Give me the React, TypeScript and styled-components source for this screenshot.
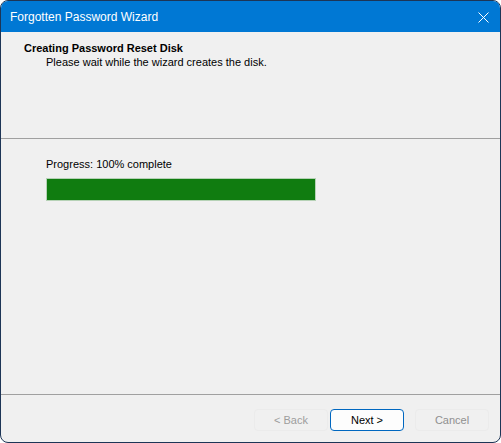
import React from 'react';
import styled, { createGlobalStyle } from 'styled-components';

const GlobalStyle = createGlobalStyle`
  html, body {
    margin: 0;
    padding: 0;
    background: #ffffff;
  }
`;

const Window = styled.div`
  width: 501px;
  height: 443px;
  box-sizing: border-box;
  display: flex;
  flex-direction: column;
  border: 1px solid #1d3556;
  border-radius: 8px;
  overflow: hidden;
  background-color: #f0f0f0;
  font-family: 'Liberation Sans', Arial, sans-serif;
  font-size: 11px;
  color: #000;
`;

const TitleBar = styled.div`
  height: 31px;
  flex-shrink: 0;
  display: flex;
  align-items: center;
  justify-content: space-between;
  padding: 0 10px 0 9px;
  background-color: #0078d4;
  color: #fff;
  font-size: 12px;
`;

const CloseIcon = styled.svg`
  width: 11px;
  height: 11px;
  margin-right: 1px;
  margin-top: 1px;
`;

const Header = styled.div`
  height: 106px;
  flex-shrink: 0;
  box-sizing: border-box;
  padding: 10px 0 0 23px;
  display: flex;
  flex-direction: column;
  gap: 1px;

  h1 {
    margin: 0;
    font-size: 11px;
    line-height: 13px;
    font-weight: 700;
  }

  p {
    margin: 0 0 0 22px;
    line-height: 13px;
  }
`;

const Rule = styled.div`
  height: 1px;
  flex-shrink: 0;
  background-color: #a0a0a0;
`;

const Body = styled.div`
  flex: 1;
  padding: 19px 0 0 45px;
  display: flex;
  flex-direction: column;
  gap: 7px;
`;

const Label = styled.div`
  line-height: 13px;
`;

const Track = styled.div`
  width: 270px;
  height: 23px;
  box-sizing: border-box;
  border: 1px solid #b6d2b6;
  background-color: #e6e6e6;
`;

const Fill = styled.div`
  height: 100%;
  background-color: #107c10;
`;

const Footer = styled.div`
  height: 47px;
  flex-shrink: 0;
  box-sizing: border-box;
  padding: 14px 11px 0 0;
  display: flex;
  justify-content: flex-end;
  align-items: flex-start;
`;

const Button = styled.button<{ primary?: boolean; gapLeft?: number }>`
  width: 74px;
  height: 22px;
  margin-left: ${({ gapLeft }) => gapLeft ?? 0}px;
  box-sizing: border-box;
  border-radius: 4px;
  font-family: 'Liberation Sans', Arial, sans-serif;
  font-size: 11px;
  padding: 0;
  background-color: ${({ primary }) => (primary ? '#fdfdfd' : '#f0f0f0')};
  border: 1px solid ${({ primary }) => (primary ? '#0067c0' : '#ebebeb')};
  color: ${({ primary, disabled }) => (disabled ? '#9d9d9d' : primary ? '#000' : '#8f8f8f')};
`;

export default function App() {
  const progress = 100;
  return (
    <>
      <GlobalStyle />
      <Window>
        <TitleBar>
          <span>Forgotten Password Wizard</span>
          <CloseIcon viewBox="0 0 11 11">
            <path d="M0.5 0.5 L10.5 10.5 M10.5 0.5 L0.5 10.5" stroke="#fff" strokeWidth="1" />
          </CloseIcon>
        </TitleBar>
        <Header>
          <h1>Creating Password Reset Disk</h1>
          <p>Please wait while the wizard creates the disk.</p>
        </Header>
        <Rule />
        <Body>
          <Label>Progress: {progress}% complete</Label>
          <Track>
            <Fill style={{ width: `${progress}%` }} />
          </Track>
        </Body>
        <Rule />
        <Footer>
          <Button disabled>&lt; Back</Button>
          <Button primary gapLeft={2}>Next &gt;</Button>
          <Button gapLeft={11}>Cancel</Button>
        </Footer>
      </Window>
    </>
  );
}
